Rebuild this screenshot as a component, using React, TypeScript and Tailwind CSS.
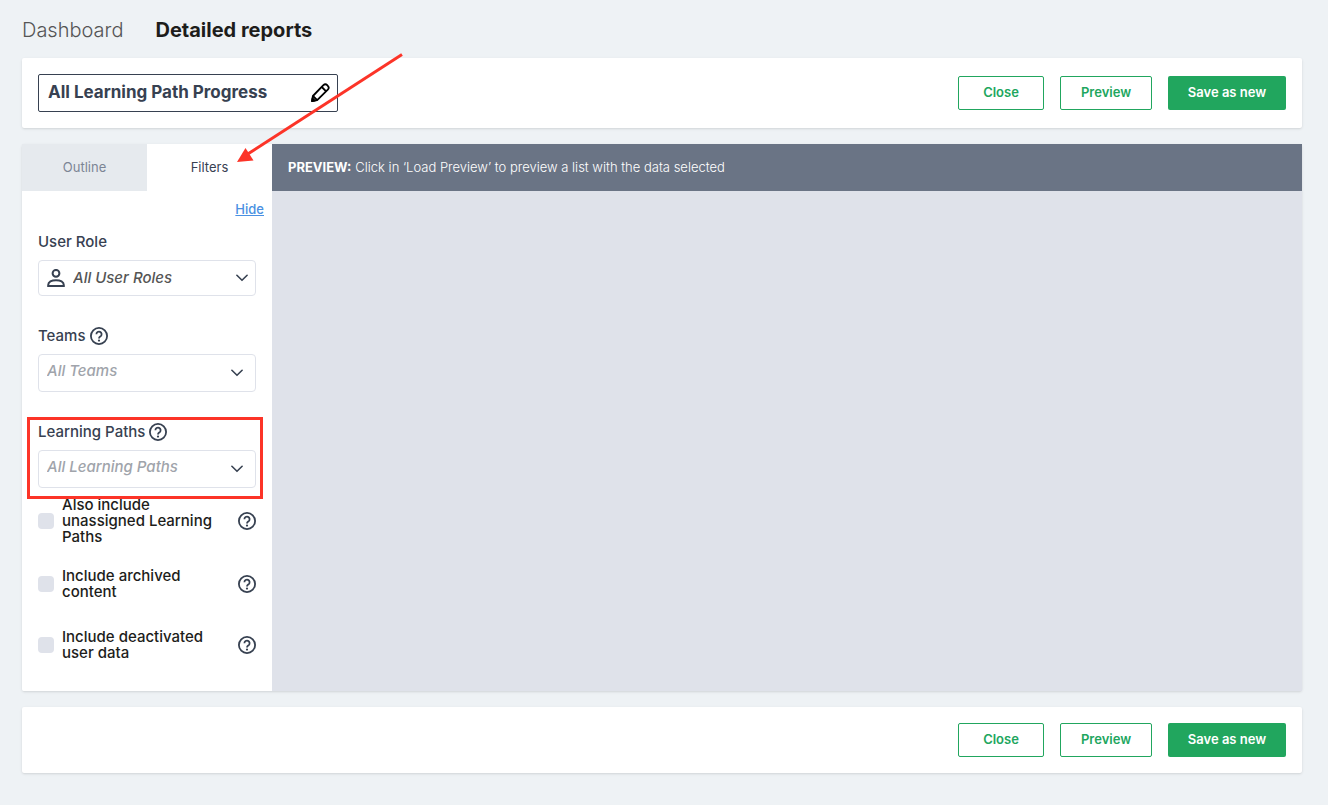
import { useState } from "react";
import clsx from "clsx";

type Field = {
  id: string;
  label: string;
  placeholder: string;
  help?: boolean;
  user?: boolean;
  highlighted?: boolean;
};

const fields: Field[] = [
  { id: "user-role", label: "User Role", placeholder: "All User Roles", user: true },
  { id: "teams", label: "Teams", placeholder: "All Teams", help: true },
  {
    id: "learning-paths",
    label: "Learning Paths",
    placeholder: "All Learning Paths",
    help: true,
    highlighted: true,
  },
];

const options = [
  { id: "unassigned", label: "Also include unassigned Learning Paths" },
  { id: "archived", label: "Include archived content" },
  { id: "deactivated", label: "Include deactivated user data" },
];

function PencilIcon() {
  return (
    <svg
      viewBox="0 0 20 20"
      className="h-5 w-5"
      fill="none"
      stroke="#000"
      strokeWidth="1.8"
      strokeLinejoin="round"
      aria-hidden
    >
      <path d="M2 18.2 2.9 13 13.4 2.2a2.7 2.7 0 0 1 3.8 0l.6.6a2.7 2.7 0 0 1 0 3.8L7.2 17.2Z" />
      <path d="m11.8 4 4.3 4.3M2.9 13l4.3 4.2" />
      <path d="m2 18.2.5-2.8 2.3 2.3Z" fill="#000" />
    </svg>
  );
}

function UserIcon() {
  return (
    <svg
      viewBox="0 0 18 18"
      className="h-[18px] w-[18px]"
      fill="none"
      stroke="#374151"
      strokeWidth="2"
      aria-hidden
    >
      <circle cx="9" cy="4.3" r="3.4" />
      <path d="M1.2 17v-1c0-3 3.4-4.8 7.8-4.8s7.8 1.8 7.8 4.8v1Z" />
    </svg>
  );
}

function ChevronIcon() {
  return (
    <svg
      viewBox="0 0 12 8"
      className="h-2 w-3"
      fill="none"
      stroke="#374151"
      strokeWidth="1.6"
      strokeLinecap="round"
      strokeLinejoin="round"
      aria-hidden
    >
      <path d="m.9 1.3 5.1 5 5.1-5" />
    </svg>
  );
}

function HelpButton({ about }: { about: string }) {
  return (
    <button type="button" aria-label={`Help: ${about}`} className="shrink-0">
      <svg
        viewBox="0 0 18 18"
        className="block h-[18px] w-[18px]"
        fill="none"
        stroke="#374151"
        strokeWidth="1.8"
        aria-hidden
      >
        <circle cx="9" cy="9" r="8.1" />
        <path d="M6.4 7.2a2.6 2.6 0 1 1 4.4 1.9c-.9.8-1.8 1.1-1.8 2.4" />
        <circle cx="9" cy="13.6" r="1.1" fill="#374151" stroke="none" />
      </svg>
    </button>
  );
}

function Actions() {
  return (
    <div className="flex gap-4 text-[13px] font-semibold text-[#21a65e]">
      <button type="button" className="h-[34px] w-[86px] rounded-xs border border-[#21a65e] bg-white">
        Close
      </button>
      <button type="button" className="h-[34px] w-[92px] rounded-xs border border-[#21a65e] bg-white">
        Preview
      </button>
      <button type="button" className="h-[34px] w-[118px] rounded-xs bg-[#21a65e] text-white">
        Save as new
      </button>
    </div>
  );
}

function FilterField({ field }: { field: Field }) {
  return (
    <div className="relative">
      <div className="mb-2 flex h-5 items-center gap-1">
        <label htmlFor={field.id} className="text-[15px] leading-5 font-medium text-[#374151]">
          {field.label}
        </label>
        {field.help && <HelpButton about={field.label} />}
      </div>
      <div className="relative">
        <select
          id={field.id}
          className={clsx(
            "block w-full appearance-none rounded-sm border border-[#dfe2ea] bg-white text-[15px] font-medium italic",
            field.user
              ? "h-9 pl-[34px] text-[#555555]"
              : "h-[38px] pb-1 pl-2 text-[#a0a4ab]",
          )}
        >
          <option>{field.placeholder}</option>
        </select>
        {field.user && (
          <span className="pointer-events-none absolute inset-y-0 left-[9px] flex items-center">
            <UserIcon />
          </span>
        )}
        <span
          className={clsx(
            "pointer-events-none absolute inset-y-0 flex items-center",
            field.user ? "right-2" : "right-[13px]",
          )}
        >
          <ChevronIcon />
        </span>
      </div>

      {/* Highlight frame */}
      {field.highlighted && (
        <div
          aria-hidden
          className="pointer-events-none absolute -top-[5px] -right-[7px] -bottom-[11px] -left-[11px] z-10 border-3 border-[#fc3428]"
        />
      )}
    </div>
  );
}

export default function App() {
  const [title, setTitle] = useState("All Learning Path Progress");
  const [tab, setTab] = useState("Filters");

  return (
    <div className="relative min-h-screen bg-[#eef2f5] pr-[26px] pb-8 pl-[22px] font-['Inter',sans-serif]">
      <nav className="flex h-[58px] items-center gap-8 pt-0.5 text-[20px]">
        <a href="#dashboard" className="font-light text-[#555555]">
          Dashboard
        </a>
        <a href="#reports" aria-current="page" className="font-bold text-[#1d1d1b]">
          Detailed reports
        </a>
      </nav>

      <main className="flex flex-col gap-4">
        <header className="flex items-center justify-between rounded-xs bg-white p-4 shadow-sm">
          <div className="flex h-[38px] w-[300px] items-center rounded-xs border border-[#374151] pr-[7px] pl-[9px]">
            <input
              aria-label="Report name"
              value={title}
              onChange={(e) => setTitle(e.target.value)}
              className="min-w-0 flex-1 text-[17px] font-bold text-[#374151] outline-none"
            />
            <button type="button" aria-label="Edit name">
              <PencilIcon />
            </button>
          </div>
          <Actions />
        </header>

        <div className="flex rounded-xs shadow-sm">
          <aside className="w-[250px] shrink-0 rounded-bl-xs bg-white">
            <div role="tablist" className="grid h-[47px] grid-cols-2 text-[13px]">
              {["Outline", "Filters"].map((name) => (
                <button
                  key={name}
                  type="button"
                  role="tab"
                  aria-selected={tab === name}
                  onClick={() => setTab(name)}
                  className={clsx(
                    tab === name ? "bg-white text-[#374151]" : "bg-[#e6eaee] text-[#7c8595]",
                  )}
                >
                  {name}
                </button>
              ))}
            </div>

            <div className="flex h-[38px] items-center justify-end pr-2">
              <a href="#hide" className="text-[13px] font-medium text-[#4a90e2] underline">
                Hide
              </a>
            </div>

            <div className="px-4 pt-[3px] pb-4">
              <div className="flex flex-col gap-[30px]">
                {fields.map((field) => (
                  <FilterField key={field.id} field={field} />
                ))}
              </div>

              <div className="mt-px flex flex-col gap-px">
                {options.map((option) => (
                  <div key={option.id} className="flex min-h-15 items-center justify-between py-2">
                    <label
                      htmlFor={option.id}
                      className="flex w-[184px] items-center gap-2 text-[15px] leading-4 font-medium text-[#1d1d1b]"
                    >
                      <input
                        id={option.id}
                        type="checkbox"
                        className="h-4 w-4 shrink-0 appearance-none rounded-sm bg-[#dfe2ea] checked:bg-[#21a65e]"
                      />
                      {option.label}
                    </label>
                    <HelpButton about={option.label} />
                  </div>
                ))}
              </div>
            </div>
          </aside>

          <section className="flex min-w-0 flex-1 flex-col bg-[#dfe2ea]">
            <p className="flex h-[47px] items-center gap-1 bg-[#6a7485] px-4 text-[13px] text-white">
              <strong className="font-bold">PREVIEW:</strong>
              <span className="font-light">
                Click in ‘Load Preview’ to preview a list with the data selected
              </span>
            </p>
          </section>
        </div>

        <footer className="flex justify-end rounded-xs bg-white p-4 shadow-sm">
          <Actions />
        </footer>
      </main>

      {/* Arrow pointing at the Filters tab */}
      <svg
        viewBox="0 0 170 114"
        className="pointer-events-none absolute top-[50px] left-[235px] z-20 h-[114px] w-[170px]"
        aria-hidden
      >
        <path d="M167 4.5 12 104.5" stroke="#fc3428" strokeWidth="3" />
        <path d="M2 112 10.5 98 18.5 110.5Z" fill="#fc3428" />
      </svg>
    </div>
  );
}
